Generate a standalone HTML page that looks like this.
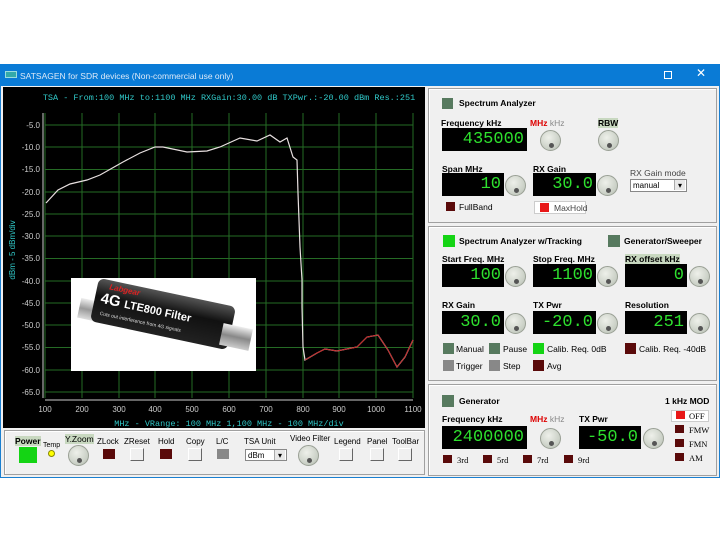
<!DOCTYPE html>
<html><head><meta charset="utf-8"><style>
*{margin:0;padding:0;box-sizing:border-box}
body{width:720px;height:540px;background:#fff;position:relative;overflow:hidden;font-family:"Liberation Sans",sans-serif;font-size:9px;color:#000}
.a{position:absolute}
.lbl{position:absolute;font-size:8.5px;white-space:nowrap;line-height:10px}
.b{font-weight:bold}
.disp{position:absolute;background:#000;color:#2ee02e;font-family:"Liberation Mono",monospace;font-size:17px;text-align:right;line-height:23px;padding-right:3px;letter-spacing:0}
.knob{position:absolute;width:21px;height:21px;border-radius:50%;background:radial-gradient(circle at 40% 35%,#eef0ea,#c8cec4 70%,#a9b0a5);border:1px solid #9aa095}
.knob:after{content:"";position:absolute;left:8px;top:12px;width:5px;height:5px;border-radius:50%;background:#555}
.sq{position:absolute;width:11px;height:11px}
.dg{background:#577a5f}.gr{background:#14d414}.dr{background:#5a0a0a}.gy{background:#888}.rd{background:#e81818}
.btn{position:absolute;width:14px;height:13px;background:#f0f0f0;border:1px solid #fff;border-right-color:#666;border-bottom-color:#666}
.sec{position:absolute;border:1px solid #a0a0a0;box-shadow:inset 1px 1px #fff;background:#f0f0f0}
.sel{position:absolute;background:#fff;border:1px solid #888;font-size:8px;padding-left:2px;line-height:11px}
.sel:after{content:"▾";position:absolute;right:1px;top:0;width:10px;height:10px;background:#e8e8e8;border-left:1px solid #aaa;text-align:center;font-size:8px}
</style></head><body>
<div class="a" style="left:0;top:64px;width:720px;height:414px;background:#f0f0f0;border:1px solid #1a7fd0"></div>
<div class="a" style="left:0;top:64px;width:720px;height:22px;background:#0a7bd6"></div>
<div class="a" style="left:5px;top:71px;width:12px;height:7px;background:#3aa;border:1px solid #9dd"></div>
<div class="lbl" style="left:20px;top:71px;color:#dde9f8;font-size:8.5px">SATSAGEN for SDR devices (Non-commercial use only)</div>
<div class="a" style="left:664px;top:71px;width:8px;height:8px;border:1px solid #fff"></div>
<div class="lbl" style="left:696px;top:68px;color:#fff;font-size:12px">✕</div>

<svg class="a" style="left:3px;top:87px" width="422" height="341" viewBox="3 87 422 341">
<rect x="3" y="87" width="422" height="341" fill="#000"/>
<g stroke="#256b25" stroke-width="1">
<line x1="45" y1="125" x2="413" y2="125"/><line x1="45" y1="147" x2="413" y2="147"/><line x1="45" y1="169.5" x2="413" y2="169.5"/><line x1="45" y1="192" x2="413" y2="192"/><line x1="45" y1="214" x2="413" y2="214"/><line x1="45" y1="236" x2="413" y2="236"/><line x1="45" y1="258.5" x2="413" y2="258.5"/><line x1="45" y1="281" x2="413" y2="281"/><line x1="45" y1="303" x2="413" y2="303"/><line x1="45" y1="325" x2="413" y2="325"/><line x1="45" y1="347.5" x2="413" y2="347.5"/><line x1="45" y1="370" x2="413" y2="370"/><line x1="45" y1="392" x2="413" y2="392"/>
<line x1="45" y1="113" x2="45" y2="398"/><line x1="82" y1="113" x2="82" y2="398"/><line x1="119" y1="113" x2="119" y2="398"/><line x1="155" y1="113" x2="155" y2="398"/><line x1="192" y1="113" x2="192" y2="398"/><line x1="229" y1="113" x2="229" y2="398"/><line x1="266" y1="113" x2="266" y2="398"/><line x1="303" y1="113" x2="303" y2="398"/><line x1="339" y1="113" x2="339" y2="398"/><line x1="376" y1="113" x2="376" y2="398"/><line x1="413" y1="113" x2="413" y2="398"/>
</g>
<g stroke="#ccc"><line x1="43" y1="113" x2="43" y2="398"/><line x1="45" y1="400" x2="413" y2="400"/></g>
<g fill="#ccc" font-family="Liberation Sans" font-size="8" text-anchor="end">
<text x="40" y="128">-5.0</text><text x="40" y="150">-10.0</text><text x="40" y="172">-15.0</text><text x="40" y="195">-20.0</text><text x="40" y="217">-25.0</text><text x="40" y="239">-30.0</text><text x="40" y="261">-35.0</text><text x="40" y="284">-40.0</text><text x="40" y="306">-45.0</text><text x="40" y="328">-50.0</text><text x="40" y="350">-55.0</text><text x="40" y="373">-60.0</text><text x="40" y="395">-65.0</text>
</g>
<g fill="#ccc" font-family="Liberation Sans" font-size="8" text-anchor="middle">
<text x="45" y="412">100</text><text x="82" y="412">200</text><text x="119" y="412">300</text><text x="155" y="412">400</text><text x="192" y="412">500</text><text x="229" y="412">600</text><text x="266" y="412">700</text><text x="303" y="412">800</text><text x="339" y="412">900</text><text x="376" y="412">1000</text><text x="413" y="412">1100</text>
</g>
<text x="229" y="100" fill="#30c8c8" font-family="Liberation Mono" font-size="8.5" text-anchor="middle">TSA - From:100 MHz to:1100 MHz RXGain:30.00 dB TXPwr.:-20.00 dBm Res.:251</text>
<text x="229" y="426" fill="#30c8c8" font-family="Liberation Mono" font-size="8.5" text-anchor="middle">MHz - VRange: 100 MHz 1,100 MHz - 100 MHz/div</text>
<text transform="translate(15,250) rotate(-90)" fill="#30c8c8" font-family="Liberation Sans" font-size="8" text-anchor="middle">dBm - 5 dBm/div</text>
<polyline fill="none" stroke="#e8e0e0" stroke-width="1.2" points="46,203 58,190 70,184 87,180 100,175 123,162 140,153 155,147 163,147 187,152 207,151 220,147 240,138 257,141 270,135 280,142 287,138 293,157 297,160 298,193 300,247 302,280 302,307 303,347 305,360 317,353 325,349 337,351 357,347 367,337 378,335 388,350 397,367 405,357 413,340"/>
<polyline fill="none" stroke="#c02020" stroke-width="1" points="305,360 317,353 325,349 337,351 357,347 367,337 378,335 388,350 397,367 405,357 413,340"/>
</svg>
<div class="a" style="left:71px;top:278px;width:185px;height:93px;background:#fff;overflow:hidden">
 <div class="a" style="left:8px;top:22px;width:22px;height:20px;background:linear-gradient(#eee,#999,#ddd);transform:rotate(12deg)"></div>
 <div class="a" style="left:22px;top:14px;width:140px;height:44px;background:linear-gradient(#555,#111 40%,#222);border-radius:6px;transform:rotate(12deg)">
  <div class="lbl" style="left:12px;top:2px;color:#d22;font-size:8px;font-style:italic;font-weight:bold">Labgear</div>
  <div class="lbl" style="left:6px;top:12px;color:#fff;font-size:15px;font-weight:bold;line-height:16px">4G <span style="font-size:11px">LTE800 Filter</span></div>
  <div class="lbl" style="left:8px;top:30px;color:#ddd;font-size:5px">Cuts out interference from 4G signals</div>
 </div>
 <div class="a" style="left:150px;top:48px;width:30px;height:22px;background:linear-gradient(#eee,#888,#ccc);transform:rotate(12deg)"></div>
</div>

<div class="sec" style="left:4px;top:430px;width:421px;height:45px"></div>
<div class="lbl b" style="left:15px;top:436px;background:#c8d8c0">Power</div>
<div class="sq gr" style="left:19px;top:447px;width:18px;height:16px"></div>
<div class="lbl" style="left:43px;top:441px;font-size:7px">Temp</div>
<div class="a" style="left:48px;top:450px;width:7px;height:7px;border-radius:50%;background:#ff0;border:1px solid #880"></div>
<div class="lbl" style="left:65px;top:434px;background:#c8d8c0">Y.Zoom</div>
<div class="knob" style="left:68px;top:445px"></div>
<div class="lbl" style="left:97px;top:437px;font-size:8px">ZLock</div><div class="sq dr" style="left:103px;top:449px;width:12px;height:10px"></div>
<div class="lbl" style="left:124px;top:437px;font-size:8px">ZReset</div><div class="btn" style="left:130px;top:448px"></div>
<div class="lbl" style="left:158px;top:437px;font-size:8px">Hold</div><div class="sq dr" style="left:160px;top:449px;width:12px;height:10px"></div>
<div class="lbl" style="left:186px;top:437px;font-size:8px">Copy</div><div class="btn" style="left:188px;top:448px"></div>
<div class="lbl" style="left:216px;top:437px;font-size:8px">L/C</div><div class="sq gy" style="left:217px;top:449px;width:12px;height:10px"></div>
<div class="lbl" style="left:244px;top:437px;font-size:8px">TSA Unit</div><div class="sel" style="left:245px;top:449px;width:42px;height:12px">dBm</div>
<div class="lbl" style="left:290px;top:434px;font-size:8px">Video Filter</div><div class="knob" style="left:298px;top:445px"></div>
<div class="lbl" style="left:334px;top:437px;font-size:8px">Legend</div><div class="btn" style="left:339px;top:448px"></div>
<div class="lbl" style="left:367px;top:437px;font-size:8px">Panel</div><div class="btn" style="left:370px;top:448px"></div>
<div class="lbl" style="left:392px;top:437px;font-size:8px">ToolBar</div><div class="btn" style="left:398px;top:448px"></div>

<div class="sec" style="left:428px;top:88px;width:289px;height:135px"></div>
<div class="sec" style="left:428px;top:226px;width:289px;height:155px"></div>
<div class="sec" style="left:428px;top:384px;width:289px;height:92px"></div>

<div class="sq dg" style="left:442px;top:98px"></div><div class="lbl b" style="left:459px;top:98px">Spectrum Analyzer</div>
<div class="lbl b" style="left:441px;top:118px">Frequency kHz</div>
<div class="disp" style="left:442px;top:128px;width:85px">435000</div>
<div class="lbl b" style="left:530px;top:118px"><span style="color:#d00">MHz</span> <span style="color:#888;font-weight:normal">kHz</span></div>
<div class="knob" style="left:540px;top:130px"></div>
<div class="lbl b" style="left:598px;top:118px;background:#c8d8c0">RBW</div>
<div class="knob" style="left:598px;top:130px"></div>
<div class="lbl b" style="left:442px;top:164px">Span MHz</div>
<div class="disp" style="left:442px;top:173px;width:62px">10</div>
<div class="knob" style="left:505px;top:175px"></div>
<div class="lbl b" style="left:533px;top:164px">RX Gain</div>
<div class="disp" style="left:533px;top:173px;width:63px">30.0</div>
<div class="knob" style="left:597px;top:175px"></div>
<div class="lbl" style="left:630px;top:168px;color:#444">RX Gain mode</div>
<div class="sel" style="left:630px;top:179px;width:57px;height:13px">manual</div>
<div class="sq dr" style="left:446px;top:202px;width:9px;height:9px"></div><div class="lbl" style="left:459px;top:202px">FullBand</div>
<div class="a" style="left:534px;top:201px;width:52px;height:13px;background:#fff;border:1px solid #ccc"></div>
<div class="sq rd" style="left:540px;top:203px;width:9px;height:9px"></div><div class="lbl" style="left:554px;top:203px;color:#444">MaxHold</div>

<div class="sq gr" style="left:443px;top:235px;width:12px;height:12px"></div><div class="lbl b" style="left:459px;top:236px">Spectrum Analyzer w/Tracking</div>
<div class="sq dg" style="left:608px;top:235px;width:12px;height:12px"></div><div class="lbl b" style="left:624px;top:236px">Generator/Sweeper</div>
<div class="lbl b" style="left:442px;top:254px">Start Freq. MHz</div>
<div class="lbl b" style="left:533px;top:254px">Stop Freq. MHz</div>
<div class="lbl b" style="left:625px;top:254px;background:#c8d8c0">RX offset kHz</div>
<div class="disp" style="left:442px;top:264px;width:62px">100</div><div class="knob" style="left:505px;top:266px"></div>
<div class="disp" style="left:533px;top:264px;width:63px">1100</div><div class="knob" style="left:597px;top:266px"></div>
<div class="disp" style="left:625px;top:264px;width:62px">0</div><div class="knob" style="left:689px;top:266px"></div>
<div class="lbl b" style="left:442px;top:300px">RX Gain</div>
<div class="lbl b" style="left:533px;top:300px">TX Pwr</div>
<div class="lbl b" style="left:625px;top:300px">Resolution</div>
<div class="disp" style="left:442px;top:311px;width:62px">30.0</div><div class="knob" style="left:505px;top:313px"></div>
<div class="disp" style="left:533px;top:311px;width:63px">-20.0</div><div class="knob" style="left:597px;top:313px"></div>
<div class="disp" style="left:625px;top:311px;width:62px">251</div><div class="knob" style="left:689px;top:313px"></div>
<div class="sq dg" style="left:443px;top:343px"></div><div class="lbl" style="left:456px;top:344px">Manual</div>
<div class="sq dg" style="left:489px;top:343px"></div><div class="lbl" style="left:503px;top:344px">Pause</div>
<div class="sq gr" style="left:533px;top:343px"></div><div class="lbl" style="left:547px;top:344px">Calib. Req. 0dB</div>
<div class="sq dr" style="left:625px;top:343px"></div><div class="lbl" style="left:639px;top:344px">Calib. Req. -40dB</div>
<div class="sq gy" style="left:443px;top:360px"></div><div class="lbl" style="left:456px;top:361px">Trigger</div>
<div class="sq gy" style="left:489px;top:360px"></div><div class="lbl" style="left:503px;top:361px">Step</div>
<div class="sq dr" style="left:533px;top:360px"></div><div class="lbl" style="left:547px;top:361px">Avg</div>

<div class="sq dg" style="left:442px;top:395px;width:12px;height:12px"></div><div class="lbl b" style="left:459px;top:396px">Generator</div>
<div class="lbl b" style="left:665px;top:396px">1 kHz MOD</div>
<div class="lbl b" style="left:442px;top:414px">Frequency kHz</div>
<div class="lbl b" style="left:530px;top:414px"><span style="color:#d00">MHz</span> <span style="color:#888;font-weight:normal">kHz</span></div>
<div class="lbl b" style="left:579px;top:414px">TX Pwr</div>
<div class="disp" style="left:442px;top:426px;width:85px">2400000</div><div class="knob" style="left:540px;top:428px"></div>
<div class="disp" style="left:579px;top:426px;width:62px">-50.0</div><div class="knob" style="left:643px;top:428px"></div>
<div class="sq dr" style="left:443px;top:455px;width:9px;height:8px"></div><div class="lbl" style="left:457px;top:455px;font-family:'Liberation Serif'">3rd</div>
<div class="sq dr" style="left:483px;top:455px;width:9px;height:8px"></div><div class="lbl" style="left:497px;top:455px;font-family:'Liberation Serif'">5rd</div>
<div class="sq dr" style="left:523px;top:455px;width:9px;height:8px"></div><div class="lbl" style="left:537px;top:455px;font-family:'Liberation Serif'">7rd</div>
<div class="sq dr" style="left:564px;top:455px;width:9px;height:8px"></div><div class="lbl" style="left:578px;top:455px;font-family:'Liberation Serif'">9rd</div>
<div class="a" style="left:671px;top:410px;width:38px;height:12px;background:#fff;border:1px solid #ccc"></div>
<div class="sq rd" style="left:676px;top:411px;width:9px;height:8px"></div><div class="lbl" style="left:689px;top:411px;font-family:'Liberation Serif'">OFF</div>
<div class="sq dr" style="left:675px;top:425px;width:9px;height:8px"></div><div class="lbl" style="left:689px;top:425px;font-family:'Liberation Serif'">FMW</div>
<div class="sq dr" style="left:675px;top:439px;width:9px;height:8px"></div><div class="lbl" style="left:689px;top:439px;font-family:'Liberation Serif'">FMN</div>
<div class="sq dr" style="left:675px;top:453px;width:9px;height:8px"></div><div class="lbl" style="left:689px;top:453px;font-family:'Liberation Serif'">AM</div>
</body></html>
